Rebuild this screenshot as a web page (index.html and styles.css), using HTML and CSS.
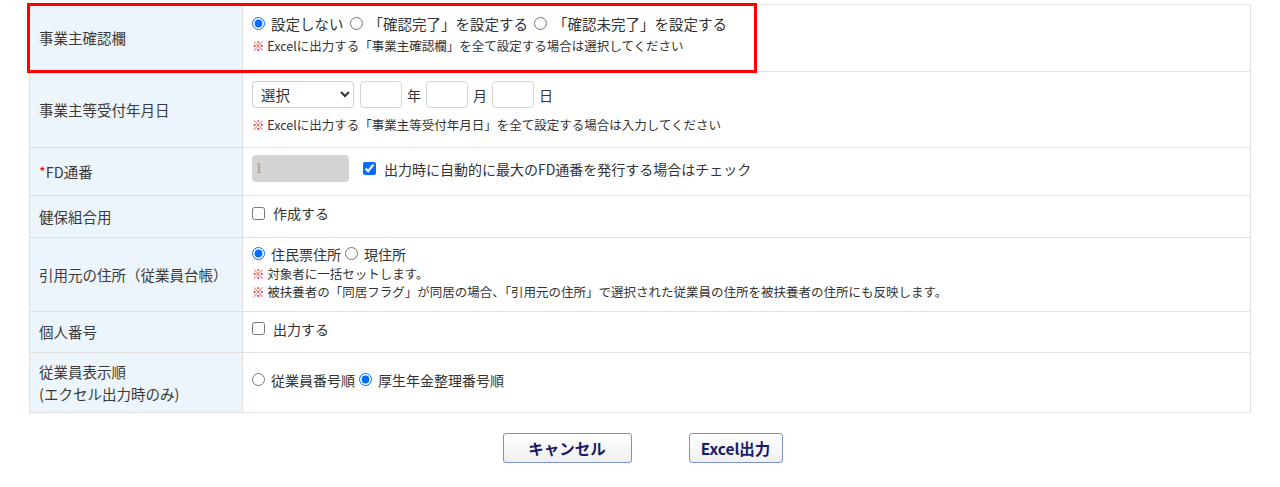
FILE: index.html
```html
<!DOCTYPE html>
<html lang="ja">
<head>
<meta charset="utf-8">
<title>出力設定</title>
<link rel="stylesheet" href="styles.css">
</head>
<body>
<div class="page">
  <table class="form">
    <tr class="r1">
      <th>事業主確認欄</th>
      <td class="top">
        <div class="line wide">
          <label class="opt"><input type="radio" name="kakunin" checked>設定しない</label>
          <label class="opt"><input type="radio" name="kakunin">「確認完了」を設定する</label>
          <label class="opt"><input type="radio" name="kakunin">「確認未完了」を設定する</label>
        </div>
        <div class="note n1"><span class="mark">※</span> Excelに出力する「事業主確認欄」を全て設定する場合は選択してください</div>
      </td>
    </tr>
    <tr class="r2">
      <th>事業主等受付年月日</th>
      <td class="top">
        <div class="dateline">
          <select class="sel"><option>選択</option></select>
          <input type="text" class="num">
          <span>年</span>
          <input type="text" class="num">
          <span>月</span>
          <input type="text" class="num">
          <span>日</span>
        </div>
        <div class="note n2"><span class="mark">※</span> Excelに出力する「事業主等受付年月日」を全て設定する場合は入力してください</div>
      </td>
    </tr>
    <tr class="r3">
      <th><span class="req">*</span>FD通番</th>
      <td>
        <div class="fdline">
          <input type="text" class="fd" value="1" disabled>
          <label class="chk"><input type="checkbox" checked>出力時に自動的に最大のFD通番を発行する場合はチェック</label>
        </div>
      </td>
    </tr>
    <tr class="r4">
      <th>健保組合用</th>
      <td><label class="chk first"><input type="checkbox">作成する</label></td>
    </tr>
    <tr class="r5">
      <th>引用元の住所（従業員台帳）</th>
      <td>
        <div class="line">
          <label class="opt"><input type="radio" name="addr" checked>住民票住所</label>
          <label class="opt"><input type="radio" name="addr">現住所</label>
        </div>
        <div class="note"><span class="mark">※</span> 対象者に一括セットします。</div>
        <div class="note"><span class="mark">※</span> 被扶養者の「同居フラグ」が同居の場合、「引用元の住所」で選択された従業員の住所を被扶養者の住所にも反映します。</div>
      </td>
    </tr>
    <tr class="r6">
      <th>個人番号</th>
      <td><label class="chk first"><input type="checkbox">出力する</label></td>
    </tr>
    <tr class="r7">
      <th>従業員表示順<br>(エクセル出力時のみ)</th>
      <td>
        <div class="line">
          <label class="opt"><input type="radio" name="order">従業員番号順</label>
          <label class="opt"><input type="radio" name="order" checked>厚生年金整理番号順</label>
        </div>
      </td>
    </tr>
  </table>
  <div class="buttons">
    <button class="btn cancel" type="button">キャンセル</button>
    <button class="btn excel" type="button">Excel出力</button>
  </div>
  <div class="highlight"></div>
</div>
</body>
</html>
```

FILE: styles.css
```css
html, body {
  margin: 0;
  padding: 0;
  background: #ffffff;
}

body {
  font-family: "Noto Sans CJK JP", "Noto Sans", sans-serif;
  color: #333333;
  font-size: 14px;
}

.page {
  position: relative;
  padding: 4px 0 0 29px;
}

.form {
  width: 1222px;
  border-collapse: collapse;
  table-layout: fixed;
}

.form th,
.form td {
  border: 1px solid #e0e0e0;
  padding: 0 9px;
}

.form th {
  width: 194px;
  background: #edf5fc;
  font-weight: normal;
  text-align: left;
  font-size: 14.5px;
  line-height: 22px;
  color: #3a3a3a;
  vertical-align: middle;
}

.form td {
  vertical-align: middle;
  font-size: 14px;
  padding-bottom: 6px;
}

.form td.top {
  vertical-align: top;
}

.r1 { height: 67px; }
.r2 { height: 76px; }
.r3 { height: 48px; }
.r4 { height: 42px; }
.r5 { height: 74px; }
.r6 { height: 41px; }
.r7 { height: 60px; }

.r1 td.top { padding-top: 7px; }
.r2 td.top { padding-top: 9px; }

.line {
  display: flex;
  align-items: center;
  height: 22px;
  font-size: 14px;
}

.opt {
  display: inline-flex;
  align-items: center;
  margin-right: 4px;
  white-space: nowrap;
}

.line.wide {
  font-size: 14.5px;
}

.line.wide .opt {
  margin-right: 6px;
}

.opt input {
  width: 13px;
  height: 13px;
  margin: 0 6px 0 0;
  accent-color: #0a6cff;
}

.chk {
  display: inline-flex;
  align-items: center;
  white-space: nowrap;
}

.chk input {
  width: 13px;
  height: 13px;
  margin: 0 8px 0 0;
  accent-color: #0a6cff;
}

.note {
  font-size: 12.5px;
  line-height: 18px;
  color: #333333;
  white-space: nowrap;
}

.note.n1 { margin-top: 3px; }
.note.n2 { margin-top: 8px; }

.mark {
  color: #ee1111;
}

.req {
  color: #ee1111;
}

.dateline {
  display: flex;
  align-items: center;
  gap: 5px;
  font-size: 14px;
}

.sel {
  width: 102px;
  height: 27px;
  border: 1px solid #cfcfcf;
  border-radius: 4px;
  background: #ffffff;
  font-family: "Noto Sans CJK JP", sans-serif;
  font-size: 14.5px;
  color: #333333;
  padding: 0 4px;
  margin-right: 1px;
}

.num {
  width: 42px;
  height: 27px;
  box-sizing: border-box;
  border: 1px solid #d6d6d6;
  border-radius: 4px;
  padding: 0 4px;
  margin: 0;
}

.fdline {
  display: flex;
  align-items: center;
}

.fd {
  width: 97px;
  height: 27px;
  box-sizing: border-box;
  border: none;
  border-radius: 4px;
  background: #d4d4d4;
  color: #9a9a9a;
  font-family: "Liberation Serif", serif;
  font-size: 15px;
  padding: 0 3px;
  margin: 0 14px 0 0;
}

.buttons {
  display: flex;
  justify-content: center;
  gap: 57px;
  margin-top: 20px;
  padding-right: 24px;
}

.btn {
  height: 30px;
  border: 1.5px solid #7d8fd8;
  border-radius: 3px;
  background: linear-gradient(#ffffff, #efefef);
  color: #1a1a66;
  font-family: "Noto Sans CJK JP", sans-serif;
  font-weight: bold;
  font-size: 15.5px;
  padding: 0 10px;
}

.btn.cancel {
  width: 129px;
}

.btn.excel {
  width: 94px;
  padding: 0;
}

.highlight {
  position: absolute;
  left: 27px;
  top: 3px;
  width: 724px;
  height: 64px;
  border: 3px solid #ff0000;
  pointer-events: none;
}
```
